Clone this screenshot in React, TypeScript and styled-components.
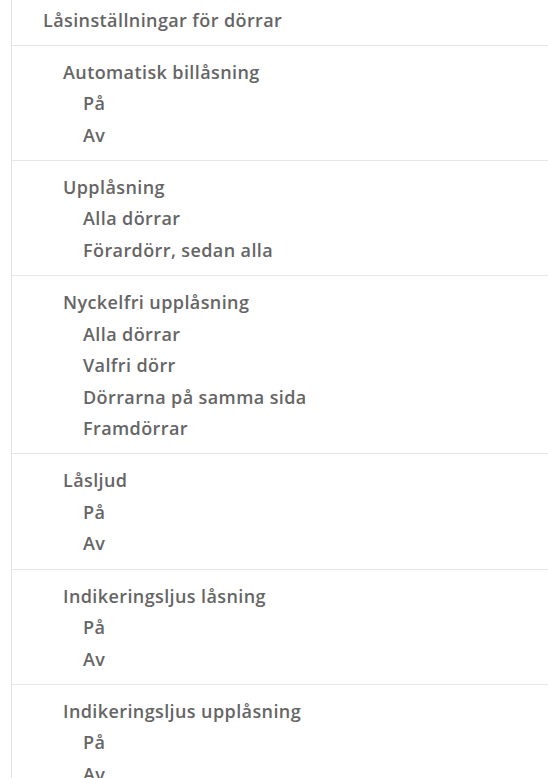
import React from "react";
import styled, { createGlobalStyle } from "styled-components";

const Global = createGlobalStyle`
  html, body { margin: 0; padding: 0; background: #fff; }
  body { font-family: "Open Sans", Lato, sans-serif; }
`;

const Panel = styled.div`
  margin-left: 11px;
  border-left: 1px solid #e3e3e3;
  min-height: 778px;
  color: #656565;
  font-weight: 600;
  font-size: 18px;
  letter-spacing: 0.4px;
  line-height: 31.5px;
`;

const Header = styled.div`
  padding: 5px 0 8px 31px;
  border-bottom: 1px solid #e6e6e6;
`;

const Section = styled.div`
  padding: 11px 0 8.8px 51px;
  border-bottom: 1px solid #e6e6e6;
  &:last-child { border-bottom: none; }
`;

const Title = styled.div``;

const Option = styled.div`
  padding-left: 20px;
`;

const data: { title: string; options: string[] }[] = [
  { title: "Automatisk billåsning", options: ["På", "Av"] },
  { title: "Upplåsning", options: ["Alla dörrar", "Förardörr, sedan alla"] },
  {
    title: "Nyckelfri upplåsning",
    options: ["Alla dörrar", "Valfri dörr", "Dörrarna på samma sida", "Framdörrar"],
  },
  { title: "Låsljud", options: ["På", "Av"] },
  { title: "Indikeringsljus låsning", options: ["På", "Av"] },
  { title: "Indikeringsljus upplåsning", options: ["På", "Av"] },
];

export default function App() {
  return (
    <>
      <Global />
      <Panel>
        <Header>Låsinställningar för dörrar</Header>
        {data.map((s) => (
          <Section key={s.title}>
            <Title>{s.title}</Title>
            {s.options.map((o) => (
              <Option key={o}>{o}</Option>
            ))}
          </Section>
        ))}
      </Panel>
    </>
  );
}
